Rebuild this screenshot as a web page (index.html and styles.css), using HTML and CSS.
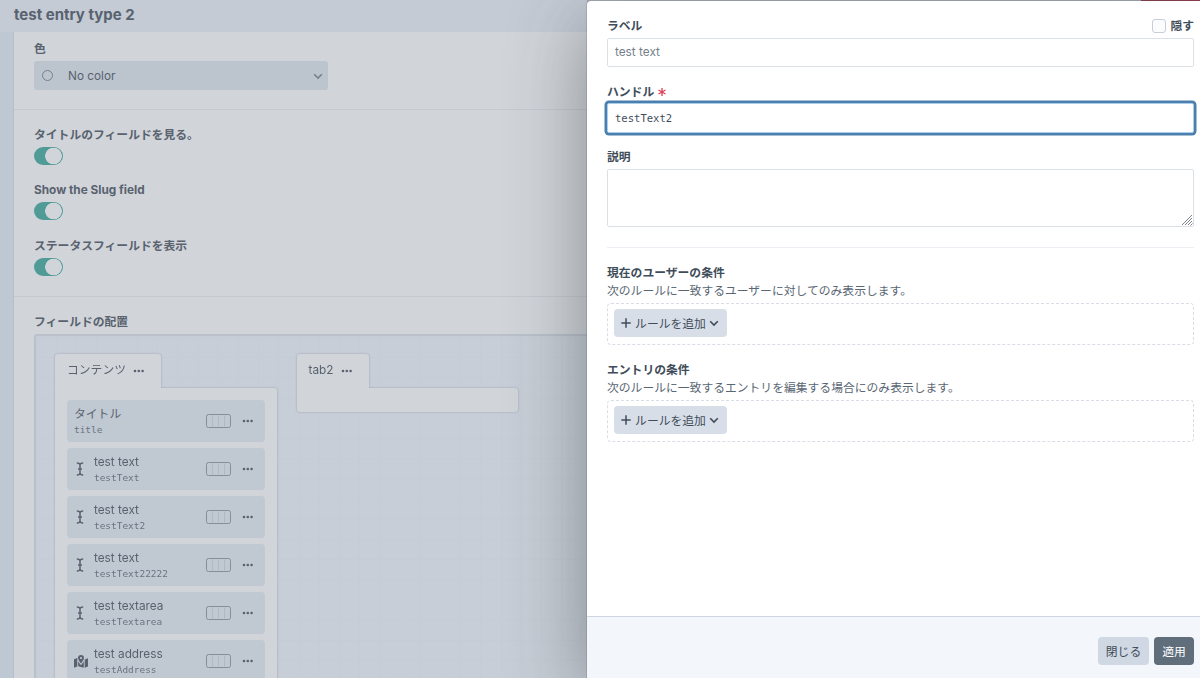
FILE: index.html
```html
<!DOCTYPE html>
<html lang="ja">
<head>
    <meta charset="UTF-8">
    <meta name="viewport" content="width=device-width, initial-scale=1.0">
    <title>test entry type 2</title>
    <link rel="stylesheet" href="styles.css">
</head>
<body>
    <!-- shared icons -->
    <svg class="sprite" width="0" height="0">
        <symbol id="chevron" viewBox="0 0 10 10">
            <path d="M1.2 3.2 5 7 8.800 3.200" fill="none" stroke="currentColor" stroke-width="1.6"/>
        </symbol>
        <symbol id="dots" viewBox="0 0 12 4">
            <circle cx="2" cy="2" r="1.3"/><circle cx="5.800" cy="2" r="1.3"/><circle cx="9.600" cy="2" r="1.3"/>
        </symbol>
        <symbol id="plus" viewBox="0 0 10 10">
            <path d="M5 .3v9.4M.3 5h9.4" fill="none" stroke="currentColor" stroke-width="1.5"/>
        </symbol>
        <symbol id="cursor" viewBox="0 0 8 14">
            <path d="M.8 1C2.8 1 4 1.600 4 3v8c0 1.400-1.200 2-3.200 2M7.200 1C5.200 1 4 1.600 4 3v8c0 1.400 1.200 2 3.200 2M2 7h4" fill="none" stroke="currentColor" stroke-width="1.5"/>
        </symbol>
        <symbol id="width" viewBox="0 0 25 14">
            <path d="M6.500 1.500v11M12.500 1.500v11M18.500 1.500v11" stroke="#b0bac5" stroke-width="1"/>
            <rect x=".5" y=".5" width="24" height="13" rx="2" fill="none" stroke="#858e9a"/>
        </symbol>
        <symbol id="map" viewBox="0 0 14 13">
            <path d="M0 4.300 3.300 3v8.500L0 12.800zM4.200 6.500 7 10.300l2.800-3.800v6.200l-5.600-1.500zM10.700 4.600 14 3.300v8.200l-3.300 1.300z"/>
            <path fill-rule="evenodd" d="M7 0a3 3 0 0 1 3 3c0 1.500-1.800 4-3 5.500C5.800 7 4 4.500 4 3a3 3 0 0 1 3-3zm0 1.900a1.100 1.100 0 1 0 0 2.200 1.100 1.100 0 0 0 0-2.200z"/>
        </symbol>
    </svg>

    <div class="page">
        <header class="page-header">
            <h1>test entry type 2</h1>
        </header>

        <main class="pane">
            <section class="section">
                <h2 class="label">色</h2>
                <div class="select">
                    <span class="color-dot"></span>
                    <span>No color</span>
                    <svg class="chevron"><use href="#chevron"/></svg>
                </div>
            </section>

            <section class="section switches">
                <div class="field">
                    <h2 class="label">タイトルのフィールドを見る。</h2>
                    <div class="switch"></div>
                </div>
                <div class="field">
                    <h2 class="label">Show the Slug field</h2>
                    <div class="switch"></div>
                </div>
                <div class="field">
                    <h2 class="label">ステータスフィールドを表示</h2>
                    <div class="switch"></div>
                </div>
            </section>

            <section class="section layout">
                <h2 class="label">フィールドの配置</h2>
                <div class="designer">
                    <div class="tab">
                        <div class="tab-name">コンテンツ <svg class="dots"><use href="#dots"/></svg></div>
                        <div class="tab-body">
                            <div class="element">
                                <div class="names"><span class="name">タイトル</span><code>title</code></div>
                                <svg class="width"><use href="#width"/></svg>
                                <svg class="dots"><use href="#dots"/></svg>
                            </div>
                            <div class="element">
                                <svg class="cursor"><use href="#cursor"/></svg>
                                <div class="names"><span class="name">test text</span><code>testText</code></div>
                                <svg class="width"><use href="#width"/></svg>
                                <svg class="dots"><use href="#dots"/></svg>
                            </div>
                            <div class="element">
                                <svg class="cursor"><use href="#cursor"/></svg>
                                <div class="names"><span class="name">test text</span><code>testText2</code></div>
                                <svg class="width"><use href="#width"/></svg>
                                <svg class="dots"><use href="#dots"/></svg>
                            </div>
                            <div class="element">
                                <svg class="cursor"><use href="#cursor"/></svg>
                                <div class="names"><span class="name">test text</span><code>testText22222</code></div>
                                <svg class="width"><use href="#width"/></svg>
                                <svg class="dots"><use href="#dots"/></svg>
                            </div>
                            <div class="element">
                                <svg class="cursor"><use href="#cursor"/></svg>
                                <div class="names"><span class="name">test textarea</span><code>testTextarea</code></div>
                                <svg class="width"><use href="#width"/></svg>
                                <svg class="dots"><use href="#dots"/></svg>
                            </div>
                            <div class="element">
                                <svg class="map"><use href="#map"/></svg>
                                <div class="names"><span class="name">test address</span><code>testAddress</code></div>
                                <svg class="width"><use href="#width"/></svg>
                                <svg class="dots"><use href="#dots"/></svg>
                            </div>
                        </div>
                    </div>
                    <div class="tab">
                        <div class="tab-name">tab2 <svg class="dots"><use href="#dots"/></svg></div>
                        <div class="tab-body"></div>
                    </div>
                </div>
            </section>
        </main>
    </div>

    <div class="top-strip"></div>

    <form class="slideout">
        <div class="slideout-body">
            <div class="label-row">
                <label class="label" for="label">ラベル</label>
                <label class="label hide"><input type="checkbox" class="checkbox">隠す</label>
            </div>
            <input type="text" class="text" id="label" placeholder="test text">

            <label class="label" for="handle">ハンドル
                <svg class="required" viewBox="0 0 8 8"><path d="M4 0v8M.5 2l7 4M7.500 2l-7 4" stroke="currentColor" stroke-width="1.300"/></svg>
            </label>
            <input type="text" class="text code focused" id="handle" value="testText2">

            <label class="label" for="description">説明</label>
            <div class="area-wrap">
                <textarea class="text area" id="description"></textarea>
                <svg class="grip" viewBox="0 0 12 12"><path d="M1 11 11 1M4 11l7-7M7 11l4-4M9.500 11.500l2-2" stroke="currentColor" stroke-width=".8"/></svg>
            </div>

            <hr>

            <h2 class="label">現在のユーザーの条件</h2>
            <p class="instructions">次のルールに一致するユーザーに対してのみ表示します。</p>
            <div class="condition">
                <button type="button" class="btn add"><svg class="plus"><use href="#plus"/></svg><span>ルールを追加</span><svg class="chevron"><use href="#chevron"/></svg></button>
            </div>

            <h2 class="label">エントリの条件</h2>
            <p class="instructions">次のルールに一致するエントリを編集する場合にのみ表示します。</p>
            <div class="condition">
                <button type="button" class="btn add"><svg class="plus"><use href="#plus"/></svg><span>ルールを追加</span><svg class="chevron"><use href="#chevron"/></svg></button>
            </div>
        </div>
        <footer class="slideout-footer">
            <button type="button" class="btn close"><span>閉じる</span></button>
            <button type="button" class="btn submit"><span>適用</span></button>
        </footer>
    </form>
</body>
</html>
```
FILE: styles.css
```css
* {
    box-sizing: border-box;
}

body {
    margin: 0;
    height: 678px;
    overflow: hidden;
    position: relative;
    background: #bec8d2;
    color: #59626f;
    font-family: Inter, "Noto Sans CJK JP", sans-serif;
    font-size: 11.8px;
    line-height: 18px;
}

h1, h2, p {
    margin: 0;
}

svg {
    display: block;
    flex: none;
    fill: currentColor;
}

.sprite {
    position: absolute;
}

.chevron {
    width: 10px;
    height: 10px;
}

.dots {
    width: 12px;
    height: 4px;
}

.label {
    display: flex;
    align-items: center;
    height: 18px;
    font-size: 11.8px;
    font-weight: 700;
}

/* page behind the slideout */
.page {
    height: 678px;
    overflow: hidden;
}

.page-header {
    height: 32px;
    padding: 5px 14px 3px;
    background: #c4cbd5;
}

.page-header h1 {
    font-size: 15px;
    line-height: 20px;
}

.pane {
    margin-left: 13px;
    height: 900px;
    background: #d1d5da;
    border-left: 1px solid #b4bfcb;
}

.section {
    padding: 8px 20px 19px;
    border-bottom: 1px solid #c5cad1;
}

.select {
    display: flex;
    align-items: center;
    width: 294px;
    height: 29px;
    margin-top: 3px;
    padding: 0 5px 0 8px;
    border-radius: 3px;
    background: #bcc4ce;
}

.select .chevron {
    margin-left: auto;
    color: #77808c;
}

.color-dot {
    width: 11px;
    height: 11px;
    margin-right: 15px;
    border: 1px solid #77808c;
    border-radius: 50%;
}

.switches {
    display: flex;
    flex-direction: column;
    gap: 16.400px;
    padding: 16px 20px 20px;
}

.switches .label {
    margin-bottom: 3px;
}

.switch {
    width: 29px;
    height: 18px;
    border-radius: 9px;
    background: radial-gradient(circle at 19.5px 9px, #d1d5da 8px, #519b96 8.600px);
}

.layout {
    padding: 16px 20px;
}

.designer {
    display: flex;
    align-items: flex-start;
    gap: 20px;
    height: 600px;
    margin-top: 3px;
    padding: 18px 19px;
    border: 2px solid #bac1cb;
    border-radius: 3px;
    background-color: #c8ced7;
    background-image: linear-gradient(to right, #c5ccd5 1px, transparent 1px), linear-gradient(#c5ccd5 1px, transparent 1px);
    background-size: 20.200px 20.200px;
    background-position: 0 1px;
}

.tab {
    width: 221.500px;
    filter: drop-shadow(0 .3px .8px #98a3b3);
}

.tab-name {
    display: inline-flex;
    align-items: center;
    gap: 7px;
    height: 35px;
    padding: 0 16px 2px 12px;
    background: #d1d5da;
    border-radius: 3px 3px 0 0;
    vertical-align: top;
}

.tab:last-child .tab-name {
    gap: 8px;
}

.tab-name .dots {
    margin-top: 2px;
}

.tab-body {
    display: flex;
    flex-direction: column;
    gap: 6.100px;
    margin-top: -1px;
    padding: 12px;
    background: #d1d5da;
    border-radius: 0 3px 3px 3px;
}

.element {
    display: flex;
    align-items: center;
    height: 42px;
    padding: 0 11px 0 7px;
    border-radius: 4px;
    background: #c0c8d2;
}

.names {
    flex: 1;
    padding-top: 1px;
}

.name {
    display: block;
    height: 17px;
    line-height: 17px;
}

.names code {
    display: block;
    color: #6a7380;
    font-family: "DejaVu Sans Mono", monospace;
    font-size: 9.450px;
    line-height: 14px;
}

.cursor {
    width: 8px;
    height: 14px;
    margin: 0 10px 0 2px;
}

.map {
    width: 14px;
    height: 13px;
    margin: 0 6px 0 0;
}

.width {
    width: 25px;
    height: 14px;
    margin-right: 11px;
}

/* edge of the header showing above the slideout */
.top-strip {
    position: absolute;
    top: 0;
    left: 587px;
    right: 0;
    height: 3px;
    background: linear-gradient(to right, #a4aab3 554px, #8b3f4c 554px);
}

/* slideout */
.slideout {
    position: absolute;
    top: 1.400px;
    left: 587px;
    right: 0;
    bottom: 0;
    display: flex;
    flex-direction: column;
    overflow: hidden;
    background: #fff;
    border-radius: 4px 0 0 0;
    box-shadow: -1px 0 0 rgba(80, 90, 105, .2), 0 20px 78px rgba(45, 50, 55, .46);
    color: #3f4d5a;
}

.slideout-body {
    flex: 1;
    padding: 15.600px 6px 0 20px;
}

.label-row {
    display: flex;
    justify-content: space-between;
}

.hide {
    gap: 4px;
}

.checkbox {
    appearance: none;
    width: 14px;
    height: 14px;
    margin: 0;
    border: 1px solid #c6cedb;
    border-radius: 3px;
    background: #fbfcfe;
}

.text {
    display: block;
    width: 100%;
    height: 29px;
    margin: 3px 0 16px;
    padding: 0 7px;
    border: 1px solid #dbe0e7;
    border-radius: 2px;
    background: #fff;
    color: #3f4d5a;
    font-family: inherit;
    font-size: 11.8px;
}

.text::placeholder {
    color: #757f8b;
}

.text.code {
    font-family: "DejaVu Sans Mono", monospace;
    font-size: 10.550px;
}

.focused {
    height: 30px;
    margin: 2px 0 15px;
    border-color: #a9cdea;
    box-shadow: 0 0 0 2.500px #4a7fae;
}

.area-wrap {
    position: relative;
}

.area {
    height: 58px;
    margin-bottom: 20px;
    resize: none;
}

/* resize handle in the corner of the textarea */
.grip {
    position: absolute;
    right: 1px;
    bottom: 1px;
    width: 12px;
    height: 12px;
    color: #5d6168;
}

.required {
    width: 8px;
    height: 8px;
    margin: 1px 0 0 4px;
    color: #dc4058;
}

hr {
    margin: 0 0 16px;
    border: 0;
    border-top: 1px solid #eceff3;
}

.instructions {
    height: 18px;
    color: #596673;
}

.condition {
    height: 42px;
    margin: 3px 0 16px;
    padding: 5.500px;
    border: 1px dashed #d9dee6;
    border-radius: 4px;
}

.btn {
    display: flex;
    align-items: center;
    justify-content: center;
    height: 28px;
    padding: 0;
    border: 0;
    border-radius: 4px;
    background: #d8dee8;
    color: #3f4d5a;
    font-family: inherit;
    font-size: 11.8px;
}

.btn span {
    margin-top: -1px;
}

.add {
    width: 113px;
    gap: 4px;
}

.add .chevron {
    margin-left: -1px;
}

.plus {
    width: 10px;
    height: 10px;
}

.slideout-footer {
    display: flex;
    align-items: center;
    justify-content: flex-end;
    gap: 5px;
    height: 62px;
    padding: 6px 6px 0 0;
    border-top: 1px solid #cdd6e2;
    background: #f3f7fc;
}

.close {
    width: 51px;
    background: #d0d8e4;
}

.submit {
    width: 40px;
    background: #606d7b;
    color: #fff;
}
```
